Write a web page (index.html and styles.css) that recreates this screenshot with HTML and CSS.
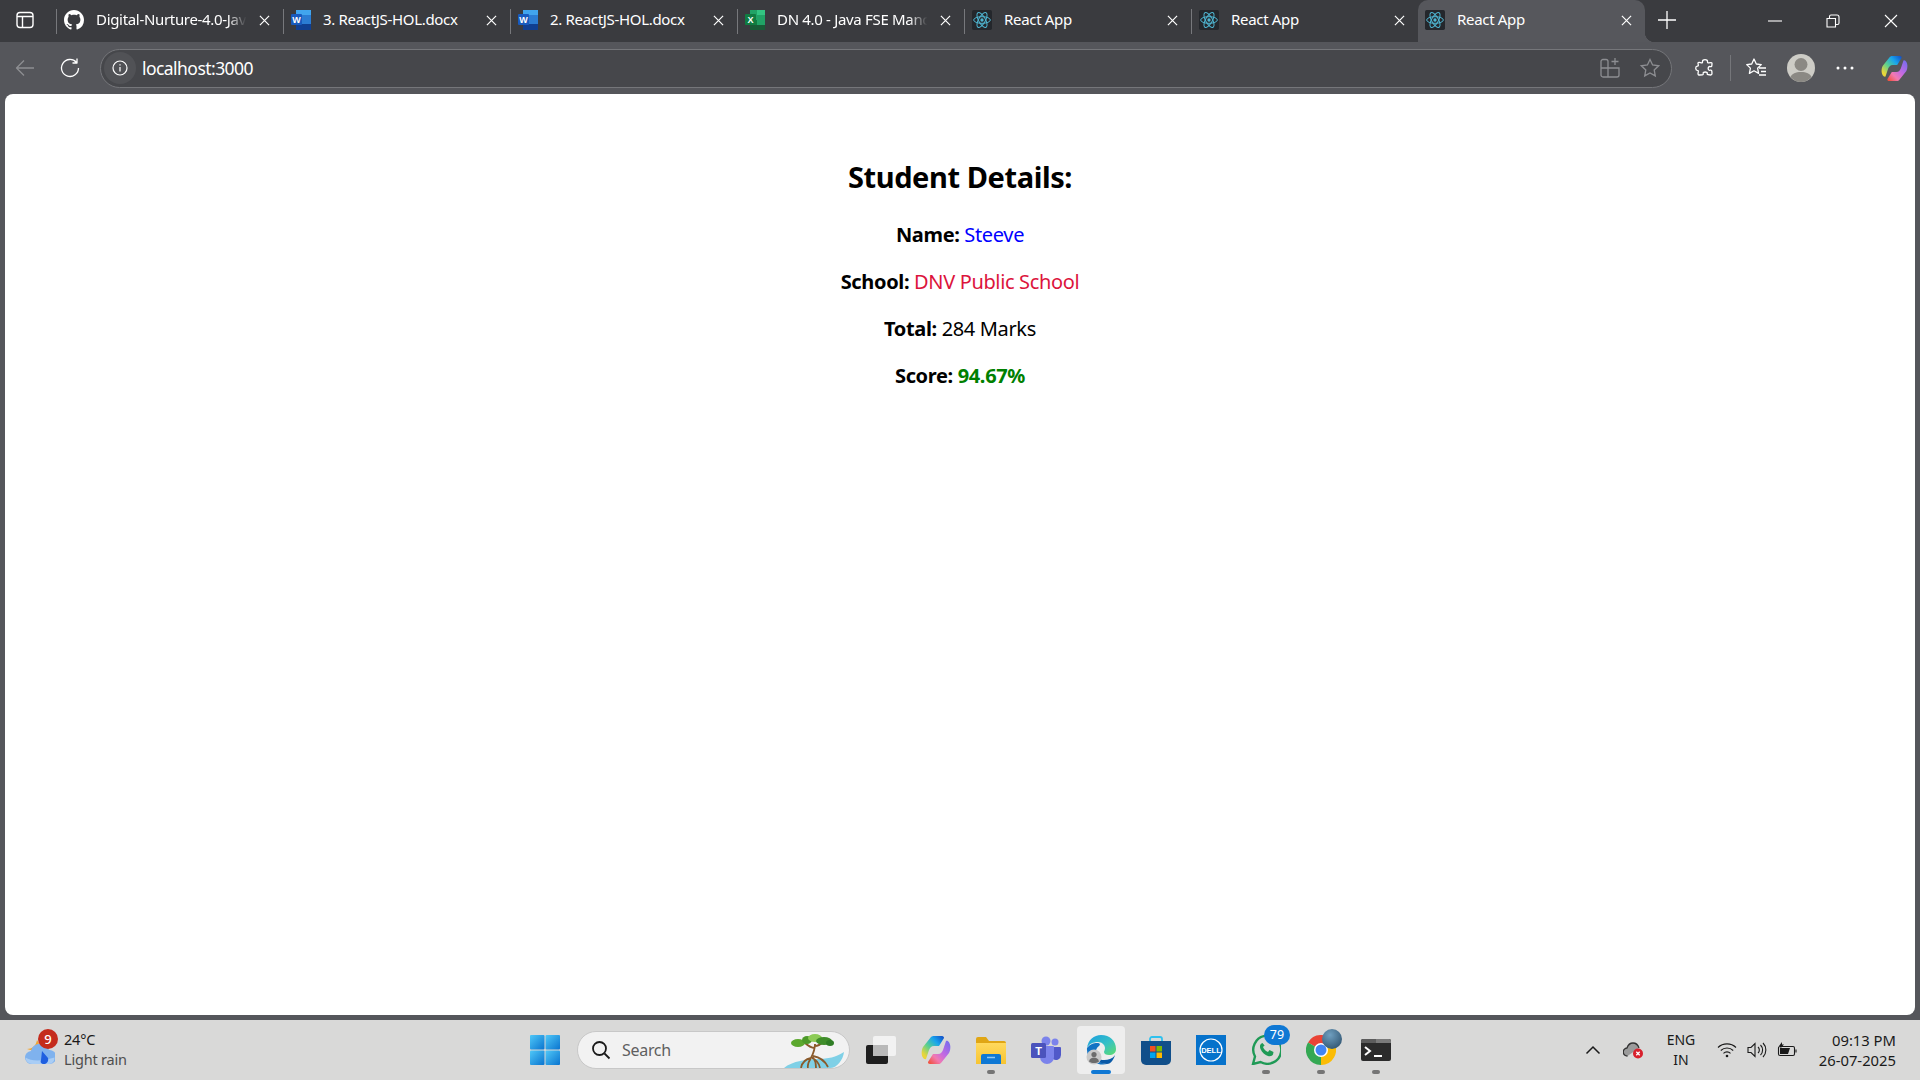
FILE: index.html
```html
<!DOCTYPE html>
<html lang="en">
<head>
<meta charset="utf-8">
<title>React App</title>
<link rel="stylesheet" href="styles.css">
</head>
<body>
<svg class="defs" aria-hidden="true">
  <defs>
    <linearGradient id="cpA" x1="1" y1="0" x2="0" y2="1"><stop offset="0" stop-color="#1248c4"/><stop offset=".3" stop-color="#18a4ee"/><stop offset=".58" stop-color="#5cd08e"/><stop offset=".85" stop-color="#e9d53a"/></linearGradient>
    <linearGradient id="cpB" x1="1" y1="0" x2="0" y2="1"><stop offset="0" stop-color="#6d6cf0"/><stop offset=".45" stop-color="#c46ae2"/><stop offset=".7" stop-color="#f27ab0"/><stop offset="1" stop-color="#f04a2a"/></linearGradient>
    <linearGradient id="edA" x1="0" y1="0" x2="1" y2="1"><stop offset="0" stop-color="#1b9de2"/><stop offset=".55" stop-color="#35c1c5"/><stop offset="1" stop-color="#5fdc6c"/></linearGradient>
    <linearGradient id="fold" x1="0" y1="0" x2="0" y2="1"><stop offset="0" stop-color="#ffd95e"/><stop offset="1" stop-color="#f7c431"/></linearGradient>
    <linearGradient id="win" x1="0" y1="0" x2="1" y2="1"><stop offset="0" stop-color="#4fc8f8"/><stop offset="1" stop-color="#0a74cf"/></linearGradient>
    <radialGradient id="blob" cx=".4" cy=".3" r=".8"><stop offset="0" stop-color="#6f9fc0"/><stop offset="1" stop-color="#2e526e"/></radialGradient>
    <symbol id="react" viewBox="0 0 24 24">
      <rect width="24" height="24" rx="2" fill="#24272c"/>
      <g fill="none" stroke="#4fb6d2" stroke-width="1.2">
        <ellipse cx="12" cy="12" rx="10" ry="4"/>
        <ellipse cx="12" cy="12" rx="10" ry="4" transform="rotate(60 12 12)"/>
        <ellipse cx="12" cy="12" rx="10" ry="4" transform="rotate(120 12 12)"/>
      </g>
      <circle cx="12" cy="12" r="2" fill="#4fb6d2"/>
    </symbol>
    <symbol id="word" viewBox="0 0 20 20">
      <path d="M5 0h13a2 2 0 0 1 2 2v16a2 2 0 0 1-2 2H5z" fill="#2b7cd3"/>
      <rect x="5" y="0" width="15" height="5" fill="#41a5ee"/>
      <rect x="5" y="14" width="15" height="6" fill="#103f91"/>
      <rect x="0" y="4" width="11" height="11" rx="1" fill="#185abd"/>
      <text x="5.5" y="12.6" class="ico-letter" text-anchor="middle">W</text>
    </symbol>
    <symbol id="copilot" viewBox="0 0 30 30">
      <path d="M10 2C11 1 12 1 13 1H21C22.500 1 23 2 23 3L18 11H13C10 11 9 13 8 15L5 24C3 25 1 22 .7 19C.5 16 1 14 2 12Z" fill="url(#cpA)"/>
      <path d="M20 28C19 29 18 29 17 29H9C7.500 29 7 28 7 27L12 19H17C20 19 21 17 22 15L25 6C27 5 29 8 29.300 11C29.500 14 29 16 28 18Z" fill="url(#cpB)"/>
    </symbol>
  </defs>
</svg>

<header class="tabstrip">
  <div class="side-btn">
    <svg width="18" height="18" viewBox="0 0 18 18" fill="none" stroke="#fff" stroke-width="1.400"><rect x="1" y="1.500" width="16" height="15" rx="3"/><path d="M1 5.500h16M6.500 5.500v11"/></svg>
  </div>
  <div class="tab">
    <svg class="fav" viewBox="0 0 16 16"><path fill="#fff" d="M8 0C3.58 0 0 3.58 0 8c0 3.54 2.29 6.53 5.47 7.59.4.07.55-.17.55-.38 0-.19-.01-.82-.01-1.49-2.01.37-2.53-.49-2.69-.94-.09-.23-.48-.94-.82-1.13-.28-.15-.68-.52-.01-.53.63-.01 1.08.58 1.23.82.72 1.21 1.87.87 2.33.66.07-.52.28-.87.51-1.07-1.78-.2-3.64-.89-3.64-3.95 0-.87.31-1.59.82-2.15-.08-.2-.36-1.02.08-2.12 0 0 .67-.21 2.2.82.64-.18 1.32-.27 2-.27.68 0 1.36.09 2 .27 1.53-1.04 2.2-.82 2.2-.82.44 1.1.16 1.92.08 2.12.51.56.82 1.27.82 2.15 0 3.07-1.87 3.75-3.65 3.95.29.25.54.73.54 1.48 0 1.07-.01 1.93-.01 2.2 0 .21.15.46.55.38A8.013 8.013 0 0016 8c0-4.42-3.58-8-8-8z"/></svg>
    <span class="title fade">Digital-Nurture-4.0-Jav</span>
    <svg class="close" viewBox="0 0 12 12"><path d="M1 1l10 10M11 1L1 11"/></svg>
  </div>
  <div class="tab">
    <svg class="fav"><use href="#word"/></svg>
    <span class="title">3. ReactJS-HOL.docx</span>
    <svg class="close" viewBox="0 0 12 12"><path d="M1 1l10 10M11 1L1 11"/></svg>
  </div>
  <div class="tab">
    <svg class="fav"><use href="#word"/></svg>
    <span class="title">2. ReactJS-HOL.docx</span>
    <svg class="close" viewBox="0 0 12 12"><path d="M1 1l10 10M11 1L1 11"/></svg>
  </div>
  <div class="tab">
    <svg class="fav" viewBox="0 0 20 20">
      <path d="M5 0h13a2 2 0 0 1 2 2v16a2 2 0 0 1-2 2H5z" fill="#21a366"/>
      <rect x="12" y="0" width="8" height="5" fill="#33c481"/>
      <rect x="5" y="10" width="7" height="5" fill="#107c41"/>
      <rect x="5" y="15" width="15" height="5" fill="#185c37"/>
      <rect x="0" y="4" width="11" height="11" rx="1" fill="#107c41"/>
      <text x="5.5" y="12.600" class="ico-letter" text-anchor="middle">X</text>
    </svg>
    <span class="title fade">DN 4.0 - Java FSE Manc</span>
    <svg class="close" viewBox="0 0 12 12"><path d="M1 1l10 10M11 1L1 11"/></svg>
  </div>
  <div class="tab">
    <svg class="fav"><use href="#react"/></svg>
    <span class="title">React App</span>
    <svg class="close" viewBox="0 0 12 12"><path d="M1 1l10 10M11 1L1 11"/></svg>
  </div>
  <div class="tab">
    <svg class="fav"><use href="#react"/></svg>
    <span class="title">React App</span>
    <svg class="close" viewBox="0 0 12 12"><path d="M1 1l10 10M11 1L1 11"/></svg>
  </div>
  <div class="tab tab-active">
    <svg class="fav"><use href="#react"/></svg>
    <span class="title">React App</span>
    <svg class="close" viewBox="0 0 12 12"><path d="M1 1l10 10M11 1L1 11"/></svg>
  </div>
  <svg class="new-tab" viewBox="0 0 18 18"><path d="M9 0v18M0 9h18"/></svg>
  <div class="win-btns">
    <svg class="win-ico" viewBox="0 0 14 14"><path d="M0 7h14"/></svg>
    <svg class="win-ico" viewBox="0 0 14 14"><path d="M1 4.500h8.500v8.500H1zM3.500 4.500V2.500a1.500 1.500 0 0 1 1.500-1.500h6a2 2 0 0 1 2 2v6a1.500 1.500 0 0 1-1.500 1.500H9.500"/></svg>
    <svg class="win-ico" viewBox="0 0 14 14"><path d="M1 1l12 12M13 1L1 13"/></svg>
  </div>
</header>

<nav class="toolbar">
  <svg class="tool back" viewBox="0 0 20 20"><path d="M19 10H1.500M9 2.500L1.500 10 9 17.500"/></svg>
  <svg class="tool reload" viewBox="0 0 20 20"><path d="M16.500 4.500A8.500 8.500 0 1 0 18.500 10M17 .5v4.500h-4.500"/></svg>
  <div class="omnibox">
    <span class="info"><svg class="info-ico" viewBox="0 0 16 16"><circle cx="8" cy="8" r="7"/><path d="M8 7v4.500M8 4.200v1.300"/></svg></span>
    <span class="url">localhost:3000</span>
    <svg class="omni-ico split" viewBox="0 0 20 20"><path d="M1 3.500a2 2 0 0 1 2-2h3a2 2 0 0 1 2 2v6.500H1zM1 10h7v9H3a2 2 0 0 1-2-2zM8 10h11v7a2 2 0 0 1-2 2H8zM15 0v7M11.500 3.500h7"/></svg>
    <svg class="omni-ico" viewBox="0 0 20 20"><path d="M10 1.500l2.600 5.500 6 .8-4.400 4.100 1.100 6L10 15l-5.300 2.900 1.100-6L1.400 7.800l6-.8z"/></svg>
  </div>
  <svg class="tool ext" viewBox="0 0 20 20"><path d="M7.500 3.800C7 .8 13 .8 12.500 3.800C12.400 4.600 13 5 13.800 4.900L16 4.600C16.800 4.500 17 5 17 5.800L16.800 7.800C16.700 8.600 16 8.900 15.200 8.600C12.500 7.800 12.500 13 15.200 12.200C16 11.900 16.700 12.300 16.800 13L17 15.600C17 16.500 16.500 17 15.700 17L13 16.700C12.200 16.600 12 16 12.300 15.400C13 13.500 7.500 13.500 8.200 15.400C8.500 16.100 8 16.700 7.300 16.800L4.500 17C3.500 17 3 16.500 3 15.700L3.300 13.500C3.400 12.800 3 12.300 2.300 12.300C.2 12.200 .2 8.300 2.300 8.200C3 8.200 3.400 7.700 3.300 7L3 5.300C3 4.500 3.500 4.200 4.300 4.300L6.500 4.900C7.200 5 7.600 4.600 7.500 3.800Z"/></svg>
  <span class="tool-sep"></span>
  <svg class="tool favs" viewBox="0 0 22 22"><path d="M9 2l2.300 5 5 .6-3.700 3.500 1 5.300L9 13.800l-4.600 2.600 1-5.300L1.700 7.600l5-.6zM14 11h7M16 14.500h5M14 18h7"/></svg>
  <svg class="avatar" viewBox="0 0 28 28"><circle cx="14" cy="14" r="14" fill="#cdccc6"/><circle cx="14" cy="10.500" r="6.500" fill="#8b8984"/><path d="M3.500 23c1.500-3.500 5-5 10.500-5s9 1.500 10.500 5c-2.500 3-6.500 5-10.500 5s-8-2-10.500-5z" fill="#8b8984"/></svg>
  <svg class="dots" viewBox="0 0 18 4"><circle cx="2" cy="2" r="1.500"/><circle cx="9" cy="2" r="1.500"/><circle cx="16" cy="2" r="1.500"/></svg>
  <svg class="copilot-top"><use href="#copilot"/></svg>
</nav>

<main class="page">
  <h1 class="heading">Student Details:</h1>
  <p class="row"><strong>Name:</strong> <span class="c-blue">Steeve</span></p>
  <p class="row"><strong>School:</strong> <span class="c-crimson">DNV Public School</span></p>
  <p class="row"><strong>Total:</strong> 284 Marks</p>
  <p class="row"><strong>Score:</strong> <strong class="c-green">94.67%</strong></p>
</main>

<footer class="taskbar">
  <div class="weather">
    <span class="weather-ico">
      <svg width="30" height="34" viewBox="0 0 30 34">
        <path d="M2 17c5 0 9-3 10-9 3 4 3 9 0 12z" fill="#f3a530"/>
        <path d="M7 32a6.500 6.500 0 0 1-1-13c1-5 6-8 11-7 4 .6 6 3 7 6a6.500 6.500 0 0 1 1 14z" fill="#7fb2ee"/>
        <path d="M7 32a6.500 6.500 0 0 1-6.500-6.500c6 4 16 4 29 0a6.500 6.500 0 0 1-5 6.500z" fill="#a9cdf5"/>
        <path d="M17 19l6 7c1 4-2 6-4 6-3 0-4-2-3-4z" fill="#1f5fe0"/>
      </svg>
      <span class="wbadge">9</span>
    </span>
    <div class="wtext"><span class="temp">24°C</span><span class="cond">Light rain</span></div>
  </div>

  <svg class="start" viewBox="0 0 30 30">
    <rect x="0" y="0" width="14.500" height="14.500" rx="1" fill="url(#win)"/>
    <rect x="15.500" y="0" width="14.500" height="14.500" rx="1" fill="url(#win)"/>
    <rect x="0" y="15.500" width="14.500" height="14.500" rx="1" fill="url(#win)"/>
    <rect x="15.500" y="15.500" width="14.500" height="14.500" rx="1" fill="url(#win)"/>
  </svg>

  <div class="search">
    <svg class="search-ico" viewBox="0 0 20 20"><circle cx="8.500" cy="8.500" r="6.500"/><path d="M13.500 13.500L18.500 18.500"/></svg>
    <span class="search-text">Search</span>
    <svg class="tree" viewBox="0 0 60 34">
      <path d="M0 34c8-7 24-9 34-9 10 0 18-2 26-7-1 8-7 16-14 16z" fill="#7fd0e6"/>
      <g fill="none" stroke="#8a5a2b" stroke-width="1.800">
        <path d="M31 10c0 6-2 10-4 14M31 14c-4 0-8-3-11-6M31 12c3 0 6-2 8-4"/>
        <path d="M27 24c-6 1-9 5-10 10M27 24c-2 3-4 6-3 10M28 23c3 2 4 6 4 11M29 22c6 1 12 5 15 11M28 24c5 2 7 5 8 10"/>
      </g>
      <g>
        <ellipse cx="14" cy="9" rx="7" ry="4" fill="#5ca82e"/>
        <ellipse cx="23" cy="6" rx="5" ry="4" fill="#4d9a29"/>
        <ellipse cx="31" cy="4" rx="7" ry="4" fill="#8ccb56"/>
        <ellipse cx="40" cy="7" rx="8" ry="4" fill="#3f8d2a"/>
        <ellipse cx="46" cy="9" rx="4" ry="3" fill="#2f7d25"/>
      </g>
    </svg>
  </div>

  <div class="apps">
    <span class="app">
      <svg class="app-ico" viewBox="0 0 30 28"><rect x="0" y="9" width="22" height="19" rx="2" fill="#1e1e1e"/><rect x="7" y="0" width="23" height="20" rx="2" fill="#f2f2f2"/><rect x="7" y="9" width="15" height="11" fill="#b9b9b9"/></svg>
    </span>
    <span class="app">
      <svg class="app-ico"><use href="#copilot"/></svg>
    </span>
    <span class="app app-running">
      <svg class="app-ico" viewBox="0 0 30 28"><path d="M0 3a2 2 0 0 1 2-2h8l3 4h15a2 2 0 0 1 2 2v4H0z" fill="#e0a615"/><path d="M0 7h30v21H0z" fill="url(#fold)"/><path d="M5 20a2 2 0 0 1 2-2h16a2 2 0 0 1 2 2v8H5z" fill="#0f78d4"/><path d="M11 21.500h8" stroke="#8cc8f5" stroke-width="1.500"/></svg>
    </span>
    <span class="app">
      <svg class="app-ico" viewBox="0 0 30 28"><circle cx="24" cy="6" r="3.500" fill="#7b83eb"/><path d="M20 11h9a1 1 0 0 1 1 1v7a5 5 0 0 1-8 4z" fill="#5059c9"/><circle cx="15" cy="5" r="4.500" fill="#7b83eb"/><path d="M9 10h13a1 1 0 0 1 1 1v10a7 7 0 0 1-14 0z" fill="#7b83eb"/><rect x="0" y="7" width="15" height="15" rx="1.500" fill="#4b53bc"/><text x="7.500" y="18.500" class="teams-letter" text-anchor="middle">T</text></svg>
    </span>
    <span class="app app-active">
      <svg class="app-ico" viewBox="0 0 30 30"><path d="M1 13C2 5 8 0 15 0c9 0 15 6 15 14 0 4-3 6-7 6-3 0-5-1-5-3 0-1 1-2 1-4 0-3-3-6-7-6-5 0-9 2-11 6z" fill="url(#edA)"/><path d="M1 13c3-4 7-5 10-5 4 0 3 2 2 3-3 2-4 6-3 10 1 4 5 8 11 8C14 31 0 27 1 13z" fill="#1273c4"/><path d="M21 29c-6 0-9-3-10-6 3 2 8 3 13 1 2-1 4-2 5-4-1 4-4 9-8 9z" fill="#0a5aa8"/><circle cx="8" cy="22" r="7.500" fill="#c9c9c9"/><circle cx="8" cy="19.500" r="2.600" fill="#6c6c6c"/><path d="M3 26.500c.5-3 3-4 5-4s4.500 1 5 4c-3 2-7 2-10 0z" fill="#6c6c6c"/></svg>
    </span>
    <span class="app">
      <svg class="app-ico" viewBox="0 0 30 30"><path d="M9 9V4a2 2 0 0 1 2-2h8a2 2 0 0 1 2 2v5" fill="none" stroke="#2fc1ee" stroke-width="1.800"/><path d="M0 6h30v19a5 5 0 0 1-5 5H5a5 5 0 0 1-5-5z" fill="#114f8a"/><rect x="9" y="11" width="5.500" height="5.500" fill="#f25022"/><rect x="15.500" y="11" width="5.500" height="5.500" fill="#7fba00"/><rect x="9" y="17.500" width="5.500" height="5.500" fill="#00a4ef"/><rect x="15.500" y="17.500" width="5.500" height="5.500" fill="#ffb900"/></svg>
    </span>
    <span class="app">
      <svg class="app-ico" viewBox="0 0 30 30"><rect width="30" height="30" fill="#0672cb"/><circle cx="15" cy="15" r="11" fill="none" stroke="#fff" stroke-width="1.200"/><text x="15" y="18" class="dell-letter" text-anchor="middle">DELL</text></svg>
    </span>
    <span class="app app-running">
      <svg class="app-ico" viewBox="0 0 30 30"><path d="M2 29l2-7.500A14 14 0 1 1 9.500 27z" fill="none" stroke="#1f9a56" stroke-width="2.400"/><path d="M10.500 8.500c-1.500 1-2 3-1 5.500 1.500 3.500 4.500 6 7.500 7 2 .6 4 0 5-1.500l.5-2.500-4-2-1.500 2c-2-.6-4-2.500-5-5l1.600-1.600L11.500 8z" fill="#1f9a56"/></svg>
      <span class="count">79</span>
    </span>
    <span class="app app-running">
      <svg class="app-ico" viewBox="0 0 30 30"><path d="M15 15L2 7.500A15 15 0 0 1 28 7.500z" fill="#ea4335"/><path d="M15 15L28 7.500A15 15 0 0 1 15 30z" fill="#fbbc05"/><path d="M15 15l0 15A15 15 0 0 1 2 7.500z" fill="#34a853"/><circle cx="15" cy="15" r="7" fill="#fff"/><circle cx="15" cy="15" r="5.500" fill="#4285f4"/></svg>
      <svg class="chrome-blob" viewBox="0 0 20 20"><circle cx="10" cy="10" r="10" fill="url(#blob)"/></svg>
    </span>
    <span class="app app-running">
      <svg class="app-ico" viewBox="0 0 30 24"><rect width="30" height="22" y="1" rx="2" fill="#2b2b2b"/><path d="M0 3a2 2 0 0 1 2-2h13v4H0z" fill="#5c5c5c"/><path d="M15 1h13a2 2 0 0 1 2 2v2H15z" fill="#7a7a7a"/><path d="M4 9l5 4-5 4" fill="none" stroke="#fff" stroke-width="2"/><path d="M13 18h8" stroke="#fff" stroke-width="2"/></svg>
    </span>
  </div>

  <div class="tray">
    <svg class="chev" viewBox="0 0 16 10"><path d="M1.500 8.500L8 2l6.500 6.500"/></svg>
    <span class="cloud">
      <svg width="20" height="18" viewBox="0 0 20 18"><path d="M4.500 15a4 4 0 0 1-.5-8c1-3 3-5 6-5 3 0 5 2 6 5" fill="#9b9b9b" stroke="#333" stroke-width="1.300"/><circle cx="15" cy="12.500" r="5" fill="#d8202c"/><path d="M13.300 10.800l3.400 3.400M16.700 10.800l-3.400 3.400" stroke="#fff" stroke-width="1.300"/></svg>
    </span>
    <span class="lang"><span>ENG</span><span>IN</span></span>
    <svg class="tray-ico" viewBox="0 0 20 16"><path d="M1 5.500a13 13 0 0 1 18 0M3.800 8.500a9 9 0 0 1 12.400 0M6.500 11.300a5 5 0 0 1 7 0"/><circle cx="10" cy="14" r="1.300" class="solid"/></svg>
    <svg class="tray-ico" viewBox="0 0 20 16"><path d="M1 5.500h3l4-4v13l-4-4H1zM11 5a4 4 0 0 1 0 6M13.500 3a7 7 0 0 1 0 10M16 1a10 10 0 0 1 0 14"/></svg>
    <svg class="tray-ico" viewBox="0 0 20 16"><path d="M3 4.500h13a1.500 1.500 0 0 1 1.500 1.500v6a1.500 1.500 0 0 1-1.500 1.500H3A1.500 1.500 0 0 1 1.500 12V6A1.500 1.500 0 0 1 3 4.500zM19 7.500v3"/><path class="solid" d="M3 6h10l-2 6H3z"/><path class="solid" d="M5 0L2 4h2L3 7l4-4.500H5z"/></svg>
    <span class="clock"><span>09:13 PM</span><span>26-07-2025</span></span>
  </div>
</footer>
</body>
</html>
```

FILE: styles.css
```css
* { box-sizing: border-box; }
html, body { margin: 0; height: 100%; }
body {
  width: 1920px;
  height: 1080px;
  overflow: hidden;
  display: flex;
  flex-direction: column;
  font-family: "Noto Sans", "Open Sans", "Liberation Sans", sans-serif;
  background: #55565b;
}
.defs { width: 0; height: 0; position: absolute; }
.ico-letter { font: 700 9px "Liberation Sans", sans-serif; fill: #fff; }
.teams-letter { font: 700 11px "Liberation Sans", sans-serif; fill: #fff; }
.dell-letter { font: 700 7.500px "Liberation Sans", sans-serif; fill: #fff; }

/* tab strip */
.tabstrip {
  height: 42px;
  flex: none;
  display: flex;
  align-items: stretch;
  background: #3a3b3f;
  color: #fff;
}
.side-btn {
  width: 56px;
  display: flex;
  align-items: center;
  justify-content: flex-start;
  padding: 0 0 2px 16px;
}
.tab {
  width: 227px;
  flex: none;
  display: flex;
  align-items: center;
  position: relative;
  padding: 0 13px 2px 8px;
  font-size: 15px;
}
.tab::before {
  content: "";
  position: absolute;
  left: 0;
  top: 9px;
  width: 1px;
  height: 25px;
  background: #77787c;
}
.fav { width: 20px; height: 20px; flex: none; }
.title {
  flex: 1;
  min-width: 0;
  margin-left: 12px;
  padding-bottom: 3px;
  white-space: nowrap;
  letter-spacing: -.32px;
}
.fade {
  -webkit-mask-image: linear-gradient(90deg, #000 85%, transparent 97%);
  mask-image: linear-gradient(90deg, #000 85%, transparent 97%);
}
.close {
  width: 11px;
  height: 11px;
  flex: none;
  margin-left: 8px;
  fill: none;
  stroke: #fff;
  stroke-width: 1.300;
}
.tab-active {
  background: #56575c;
  border-radius: 10px 10px 0 0;
  padding-left: 7px;
}
.tab-active::before { display: none; }
.tab-active::after {
  content: "";
  position: absolute;
  right: -10px;
  bottom: 0;
  width: 10px;
  height: 10px;
  background: radial-gradient(circle at 100% 0, transparent 10px, #56575c 10.500px);
}
.new-tab {
  width: 18px;
  height: 18px;
  align-self: center;
  margin: 0 0 2px 13px;
  fill: none;
  stroke: #fff;
  stroke-width: 1.300;
}
.win-btns {
  margin-left: auto;
  display: flex;
  align-items: center;
  gap: 44px;
  padding: 0 22px 0 0;
}
.win-ico {
  width: 14px;
  height: 14px;
  fill: none;
  stroke: #fff;
  stroke-width: 1.100;
}

/* toolbar */
.toolbar {
  height: 52px;
  flex: none;
  display: flex;
  align-items: center;
  padding: 0 0 0 15px;
  background: #55565b;
}
.tool {
  flex: none;
  fill: none;
  stroke: #fff;
  stroke-width: 1.300;
  stroke-linejoin: round;
  width: 20px;
  height: 20px;
}
.back { stroke: #8d8e92; }
.reload { margin-left: 25px; }
.omnibox {
  width: 1572px;
  height: 39px;
  margin-left: 20px;
  padding: 0 11px 0 3px;
  flex: none;
  display: flex;
  align-items: center;
  background: #46474b;
  border: 1.500px solid #75767a;
  border-radius: 20px;
}
.info {
  width: 32px;
  height: 32px;
  border-radius: 50%;
  background: #515256;
  display: flex;
  align-items: center;
  justify-content: center;
  flex: none;
}
.info-ico { width: 16px; height: 16px; fill: none; stroke: #fff; stroke-width: 1.200; }
.url { color: #fff; font-size: 17.500px; letter-spacing: -.55px; margin-left: 6px; flex: 1; }
.omni-ico { width: 20px; height: 20px; fill: none; stroke: #8d8e92; stroke-width: 1.300; flex: none; }
.split { margin-right: 20px; }
.ext { margin-left: 23px; }
.tool-sep { width: 1px; height: 26px; background: #75767a; margin-left: 15px; flex: none; }
.favs { width: 22px; height: 22px; margin-left: 14px; }
.avatar { width: 28px; height: 28px; margin-left: 20px; flex: none; }
.dots { width: 18px; height: 4px; margin-left: 21px; fill: #fff; flex: none; }
.copilot-top { width: 27px; height: 27px; margin-left: 27px; flex: none; }

/* page */
.page {
  flex: 1;
  margin: 0 5px;
  padding-top: 40px;
  background: #fff;
  border-radius: 8px;
  text-align: center;
  color: #000;
}
.heading {
  font-size: 29px;
  line-height: 42px;
  margin: 22px 0 23px;
  letter-spacing: -.4px;
  font-weight: 700;
}
.row {
  font-size: 20px;
  line-height: 27px;
  margin: 0 0 20px;
  letter-spacing: -.35px;
}
.c-blue { color: #0000ff; }
.c-crimson { color: #dc143c; }
.c-green { color: #008000; }

/* taskbar */
.taskbar {
  height: 60px;
  flex: none;
  margin-top: 5px;
  display: flex;
  align-items: center;
  padding: 0 24px 0 25px;
  background: #d9d9d8;
  color: #1a1a1a;
  position: relative;
}
.weather {
  width: 505px;
  flex: none;
  display: flex;
  align-items: center;
}
.weather-ico { position: relative; width: 30px; height: 34px; display: block; flex: none; margin-top: -3px; }
.wbadge {
  position: absolute;
  left: 13px;
  top: -3px;
  width: 20px;
  height: 20px;
  border-radius: 50%;
  background: #c42b1c;
  color: #fff;
  font-size: 13px;
  font-weight: 500;
  line-height: 20px;
  text-align: center;
}
.wtext { margin-left: 9px; padding-bottom: 2px; display: flex; flex-direction: column; font-size: 14.500px; line-height: 20px; letter-spacing: -.2px; }
.cond { color: #4e4e4e; }
.start { width: 30px; height: 30px; flex: none; }
.search {
  width: 273px;
  height: 38px;
  margin-left: 17px;
  flex: none;
  display: flex;
  align-items: center;
  padding-left: 13px;
  background: #f2f2f2;
  border: 1px solid #c8c8c8;
  border-radius: 19px;
  overflow: hidden;
}
.search-ico { width: 20px; height: 20px; flex: none; fill: none; stroke: #1a1a1a; stroke-width: 1.800; }
.search-text { font-size: 16px; color: #5f5f5f; margin-left: 11px; flex: 1; letter-spacing: -.3px; }
.tree { width: 60px; height: 34px; flex: none; margin: 2px 5px 0 0; align-self: flex-end; }
.apps { display: flex; align-items: center; gap: 25px; margin-left: 16px; }
.app { width: 30px; height: 30px; display: flex; align-items: center; position: relative; flex: none; }
.app-ico { width: 30px; height: 30px; display: block; }
.app-running::after {
  content: "";
  position: absolute;
  left: 11px;
  bottom: -9px;
  width: 8px;
  height: 4px;
  border-radius: 2px;
  background: #757575;
}
.app-active::before {
  content: "";
  position: absolute;
  left: -9px;
  top: -9px;
  width: 48px;
  height: 48px;
  background: #eeeeee;
  border-radius: 4px;
  z-index: 0;
}
.app-active .app-ico { position: relative; }
.app-active::after {
  content: "";
  position: absolute;
  left: 5px;
  bottom: -9px;
  width: 20px;
  height: 4px;
  border-radius: 2px;
  background: #0f78d4;
}
.count {
  position: absolute;
  left: 13px;
  top: -10px;
  width: 26px;
  height: 20px;
  border-radius: 10px;
  background: #0f78d4;
  color: #fff;
  font-size: 12.500px;
  line-height: 20px;
  text-align: center;
}
.chrome-blob { position: absolute; left: 16px; top: -6px; width: 20px; height: 20px; }
.tray { margin-left: auto; display: flex; align-items: center; }
.chev { width: 16px; height: 10px; fill: none; stroke: #1a1a1a; stroke-width: 1.500; flex: none; }
.cloud { margin-left: 22px; width: 20px; height: 18px; flex: none; display: block; }
.lang {
  width: 40px;
  margin-left: 18px;
  display: flex;
  flex-direction: column;
  align-items: center;
  font-size: 14px;
  line-height: 20px;
  flex: none;
}
.tray-ico { width: 20px; height: 16px; fill: none; stroke: #1a1a1a; stroke-width: 1.100; flex: none; margin-left: 10px; }
.lang + .tray-ico { margin-left: 16px; }
.tray-ico .solid { fill: #1a1a1a; stroke: none; }
.clock {
  width: 99px;
  display: flex;
  flex-direction: column;
  align-items: flex-end;
  font-size: 14.800px;
  line-height: 20px;
  flex: none;
}
```
